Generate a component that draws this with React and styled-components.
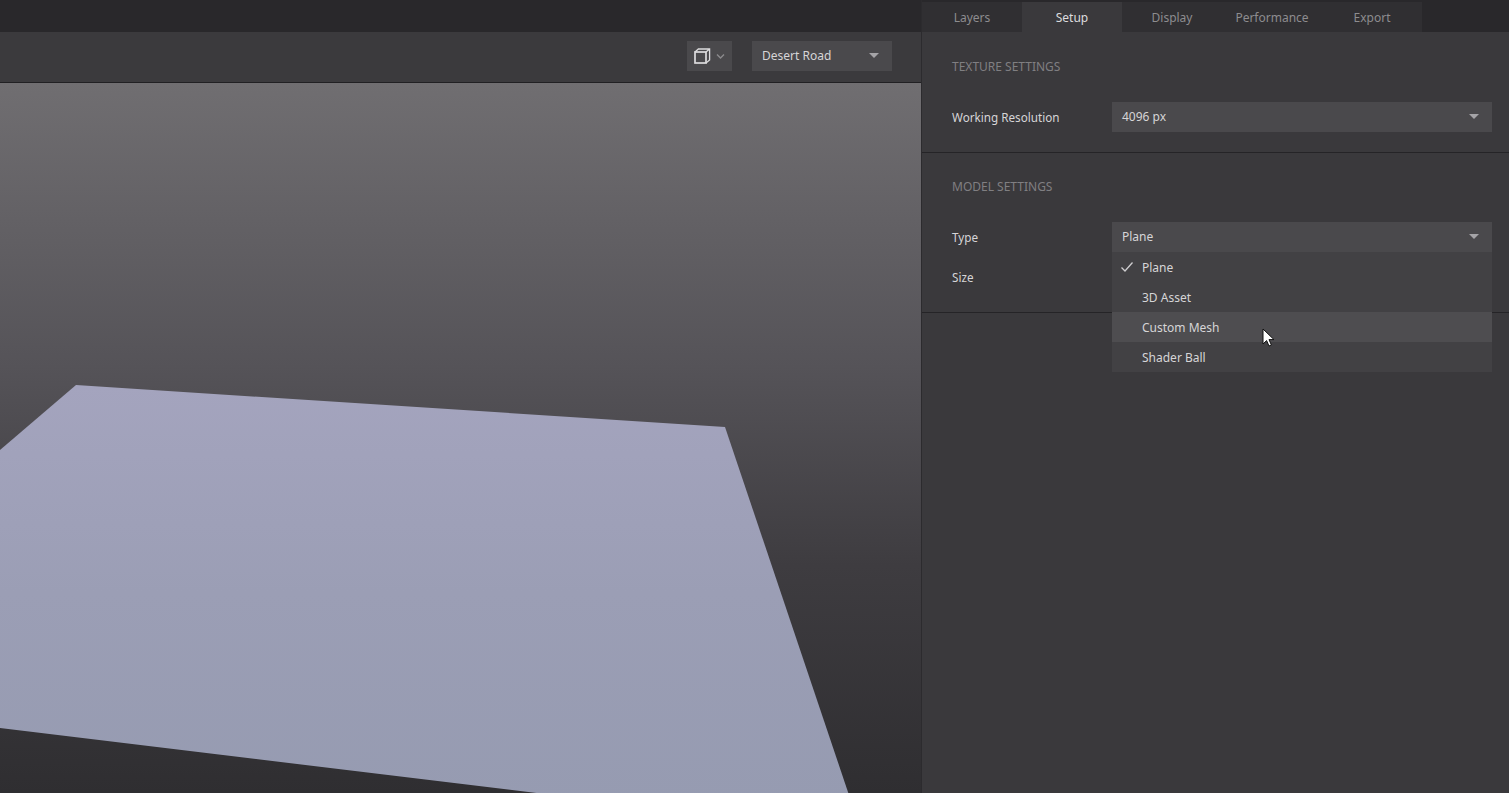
import React from 'react';
import styled, { createGlobalStyle } from 'styled-components';

const Global = createGlobalStyle`
  html, body { margin: 0; height: 100%; overflow: hidden; background: #3a393c; }
  #root { height: 100%; }
  * { box-sizing: border-box; }
`;

const Shell = styled.div`
  display: grid;
  grid-template-columns: 921px 1fr;
  width: 1509px;
  height: 793px;
  overflow: hidden;
  font-family: "Noto Sans", "Open Sans", sans-serif;
  font-size: 12px;
  color: #d6d5d7;
`;

const Stage = styled.div`
  display: flex;
  flex-direction: column;
  min-width: 0;
`;
const TitleBar = styled.div`
  height: 32px;
  background: #29282b;
`;
const Toolbar = styled.div`
  height: 51px;
  display: flex;
  justify-content: flex-end;
  align-items: center;
  gap: 20px;
  padding: 0 29px 2px 0;
  background: #3b3a3d;
  border-bottom: 1px solid #212023;
`;
const ViewButton = styled.div`
  width: 45px;
  height: 30px;
  background: #4a494c;
  display: flex;
  align-items: center;
  gap: 5px;
  padding-left: 7px;
`;
const SceneSelect = styled.div`
  width: 140px;
  height: 30px;
  background: #4a494c;
  display: flex;
  align-items: center;
  justify-content: space-between;
  padding: 0 13px 1px 10px;
  color: #d6d5d7;
`;
const Caret = styled.span`
  width: 0;
  height: 0;
  border-left: 5px solid transparent;
  border-right: 5px solid transparent;
  border-top: 5px solid #a5a4a7;
`;
const Viewport = styled.div`
  flex: 1;
  min-height: 0;
  background: linear-gradient(180deg, #706e71 0%, #555358 40%, #3e3c40 68%, #2f2e31 100%);
  svg { display: block; }
`;

const Panel = styled.div`
  position: relative;
  display: flex;
  flex-direction: column;
  background: #3a393c;
  border-left: 1px solid #2c2b2e;
`;
const TabBar = styled.div`
  height: 32px;
  display: flex;
  background: #29282b;
  padding-top: 2px;
`;
const Tab = styled.div`
  width: 100px;
  display: flex;
  align-items: center;
  justify-content: center;
  background: ${p => (p.$active ? '#3a393c' : '#302f32')};
  color: ${p => (p.$active ? '#dddcde' : '#8d8c8f')};
`;
const Section = styled.section`
  height: ${p => p.$height}px;
  padding: ${p => p.$top}px 17px 0 30px;
  border-bottom: 1px solid #252427;
`;
const SectionTitle = styled.div`
  height: 18px;
  line-height: 18px;
  color: #807f82;
  font-size: 12px;
`;
const Rows = styled.div`
  margin-top: 26px;
  display: flex;
  flex-direction: column;
  gap: 10px;
`;
const Row = styled.div`
  height: 30px;
  display: grid;
  grid-template-columns: 160px 380px;
  align-items: center;
  color: #d6d5d7;
`;
const Label = styled.span`
  font-size: 11.7px;
`;
const Select = styled.div`
  height: 30px;
  background: #4a494c;
  display: flex;
  align-items: center;
  justify-content: space-between;
  padding: 0 13px 1px 10px;
`;
const Menu = styled.div`
  position: absolute;
  left: 190px;
  top: 252px;
  width: 380px;
  background: #424144;
`;
const MenuItem = styled.div`
  position: relative;
  height: 30px;
  display: flex;
  align-items: center;
  padding-left: 30px;
  background: ${p => (p.$hover ? '#4e4d50' : 'transparent')};
`;
const Check = styled.svg`
  position: absolute;
  left: 8px;
  top: 9px;
`;
const Cursor = styled.svg`
  position: absolute;
  left: 340px;
  top: 328px;
`;

const tabs = ['Layers', 'Setup', 'Display', 'Performance', 'Export'];

export default function App() {
  return (
    <Shell>
      <Global />
      <Stage>
        <TitleBar />
        <Toolbar>
          <ViewButton>
            <svg width="17" height="16" viewBox="0 0 17 16" fill="none" stroke="#dcdbdd" strokeWidth="1.7">
              <rect x="1" y="4" width="11" height="11" />
              <path d="M1 4 L4.4 1 H15.6 V12 L12 15 M12 4 L15.6 1" strokeWidth="1.3" />
            </svg>
            <svg width="9" height="7" viewBox="0 0 9 7" fill="none" stroke="#8b8a8d" strokeWidth="1.4">
              <path d="M1 1.5 L4.5 5 L8 1.5" />
            </svg>
          </ViewButton>
          <SceneSelect>
            Desert Road
            <Caret />
          </SceneSelect>
        </Toolbar>
        <Viewport>
          <svg width="921" height="710" viewBox="0 0 921 710">
            <defs>
              <linearGradient id="plane" x1="0" y1="0" x2="0" y2="1">
                <stop offset="0" stopColor="#a4a4be" />
                <stop offset="0.5" stopColor="#9b9eb5" />
                <stop offset="1" stopColor="#969bb1" />
              </linearGradient>
            </defs>
            <polygon points="76,302 725,344 851,718 553,712 0,645 0,367" fill="url(#plane)" />
          </svg>
        </Viewport>
      </Stage>
      <Panel>
        <TabBar>
          {tabs.map(t => (
            <Tab key={t} $active={t === 'Setup'}>{t}</Tab>
          ))}
        </TabBar>
        <Section $height={121} $top={26}>
          <SectionTitle>TEXTURE SETTINGS</SectionTitle>
          <Rows>
            <Row>
              <Label>Working Resolution</Label>
              <Select>4096 px<Caret /></Select>
            </Row>
          </Rows>
        </Section>
        <Section $height={160} $top={25}>
          <SectionTitle>MODEL SETTINGS</SectionTitle>
          <Rows>
            <Row>
              <Label>Type</Label>
              <Select>Plane<Caret /></Select>
            </Row>
            <Row>
              <Label>Size</Label>
            </Row>
          </Rows>
        </Section>
        <Menu>
          <MenuItem>
            <Check width="14" height="12" viewBox="0 0 14 12" fill="none" stroke="#cfced0" strokeWidth="1.3">
              <path d="M1.5 6.5 L5 10 L12.5 1.5" />
            </Check>
            Plane
          </MenuItem>
          <MenuItem>3D Asset</MenuItem>
          <MenuItem $hover>Custom Mesh</MenuItem>
          <MenuItem>Shader Ball</MenuItem>
        </Menu>
        <Cursor width="13" height="20" viewBox="0 0 13 20">
          <path d="M1 1 V16 L4.6 12.6 L7 18 L9.4 17 L7 11.6 H12 Z" fill="#fff" stroke="#111" strokeWidth="1" />
        </Cursor>
      </Panel>
    </Shell>
  );
}
